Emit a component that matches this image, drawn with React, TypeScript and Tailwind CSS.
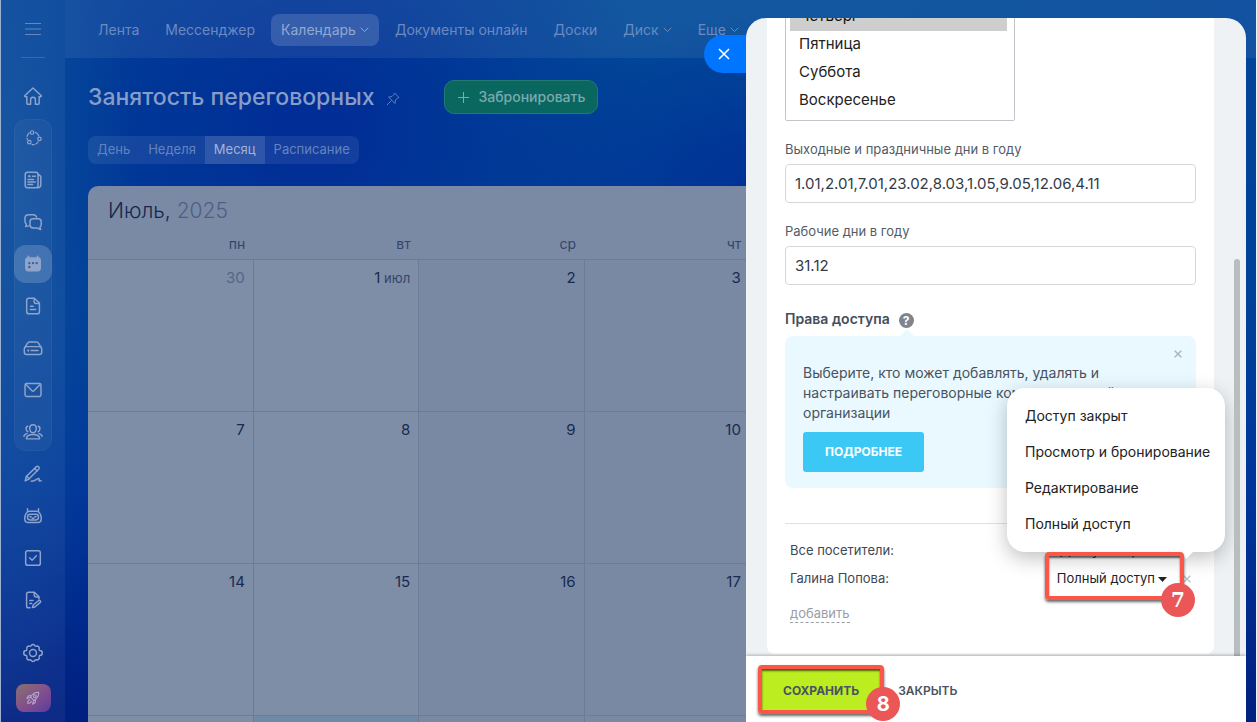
import { ReactNode, useState } from "react";
import clsx from "clsx";

type IconName =
  | "home" | "network" | "news" | "chats" | "calendar" | "doc" | "drive" | "mail"
  | "people" | "pen" | "robot" | "check" | "note" | "gear" | "rocket";

const icons: Record<IconName, ReactNode> = {
  home: <path d="M3.200 11.400 12 3.200l8.800 8.200c.5.500.2 1.300-.5 1.300h-1.600v7.400c0 .5-.3.800-.8.800h-3.300v-5a2.600 2.600 0 0 0-5.200 0v5H6.100a.8.8 0 0 1-.8-.8v-7.400H3.700c-.7 0-1-.8-.5-1.300Z" />,
  network: (
    <g strokeWidth="1.3">
      <circle cx="11" cy="6" r="1.900" />
      <circle cx="19" cy="13" r="1.900" />
      <circle cx="8" cy="16.500" r="1.900" />
      <path d="M7.800 6.500a7 7 0 0 0-2.300 3.800M5.500 12.300l.4 1.300M14.500 5.800a7.500 7.500 0 0 1 3.800 4M17.500 16.400a7 7 0 0 1-2.200 2M13.300 19.200h-2.400" />
    </g>
  ),
  news: (
    <>
      <rect x="3.500" y="3.500" width="14" height="17" rx="2.500" />
      <path d="M17.500 6.200c1.900.2 3 1 3 2.600v8.600c0 1.700-1.300 2.900-3.600 3" />
      <path d="M11.500 7.800h3M6.500 11.500h6M6.500 14.200h8M6.500 17h5" />
      <circle cx="8" cy="7.800" r="1.300" fill="currentColor" stroke="none" />
    </>
  ),
  chats: (
    <>
      <path d="M7.500 16.200c-1.500.3-2.600.7-3.600.6.6-.8.9-1.600.8-2.500-1-.9-1.500-2-1.500-3.500V8c0-2.500 1.500-4 4-4h5c2 0 3.200 1 3.700 2.600" />
      <path d="M12.200 8.500h5.300c2.200 0 3.500 1.400 3.500 3.500v2.500c0 1.300-.5 2.300-1.400 3-.1 1 .3 1.900.9 2.700-1.300 0-2.600-.7-3.700-1.700h-4.600c-2.200 0-3.500-1.400-3.500-3.500v-3c0-2.100 1.300-3.500 3.500-3.500Z" />
    </>
  ),
  calendar: (
    <>
      <path d="M7 2.800a1 1 0 0 1 1 1v.7h8v-.7a1 1 0 1 1 2 0v.8c1.800.3 2.700 1.300 2.700 3.100v9c0 2.200-1.200 3.400-3.400 3.400H6.700c-2.200 0-3.400-1.200-3.400-3.400v-9c0-1.800.9-2.800 2.700-3.100v-.8a1 1 0 0 1 1-1Z" fill="currentColor" stroke="none" />
      <g fill="#3c5fa0" stroke="none">
        <circle cx="8" cy="11" r="1.300" />
        <circle cx="12" cy="11" r="1.300" />
        <circle cx="16" cy="11" r="1.300" />
        <circle cx="8" cy="15.300" r="1.300" />
      </g>
    </>
  ),
  doc: (
    <>
      <path d="M7.500 3.500h6l5.500 5.300v9.400c0 1.500-.9 2.300-2.400 2.300H7.500c-1.500 0-2.400-.8-2.400-2.300V5.800c0-1.500.9-2.300 2.400-2.300Z" />
      <path d="M13.200 3.800v3.400c0 1.200.7 2 2 2h3.500M9.300 12.300h3M9 15.800h6" />
    </>
  ),
  drive: (
    <>
      <rect x="2.500" y="10.500" width="19" height="8.500" rx="2.500" />
      <path d="M3.500 10.800 6 6.800c.5-.9 1.200-1.300 2.200-1.300h7.600c1 0 1.700.4 2.200 1.300l2.500 4M10 14.800h7.500" />
      <circle cx="6.800" cy="14.800" r="1.200" fill="currentColor" stroke="none" />
    </>
  ),
  mail: (
    <>
      <rect x="3.300" y="5" width="17.400" height="14" rx="1.800" />
      <path d="m4 5.800 7 7c.6.6 1.400.6 2 0l7-7" />
    </>
  ),
  people: (
    <>
      <path d="M12 4c2.300 0 3.600 1.600 3.600 4.200 0 2.500-1.500 4.600-3.600 4.600s-3.600-2.100-3.600-4.600C8.400 5.600 9.700 4 12 4Z" />
      <path d="M5.500 19.500h13c.5 0 .8-.3.700-.8-.5-2.500-3.200-3.900-7.200-3.900s-6.700 1.400-7.200 3.900c-.1.500.2.800.7.800Z" />
      <path d="M6.300 5.800C4.800 6.200 4.300 7.600 4.500 9c.2 1.300.9 2.300 1.900 2.700M5.500 13.800c-2 .4-3.200 1.400-3.400 2.900M17.700 5.800c1.500.4 2 1.800 1.800 3.200-.2 1.300-.9 2.300-1.900 2.700M18.500 13.800c2 .4 3.200 1.400 3.400 2.900" />
    </>
  ),
  pen: (
    <>
      <path d="m3.500 19.500 1.200-4.800L15.500 4.200c.9-.9 1.900-.9 2.700-.1.900.9.900 1.900 0 2.800L7.500 17.500l-4 2Z" />
      <path d="m13.800 6 2.700 2.700M5 14.500l2.700 2.700M10 19.800c3.500.8 7-3.300 8.300-3 1.200.3-.4 2 .5 2.700.4.300 1.200.2 2.200-.2" />
    </>
  ),
  robot: (
    <>
      <path d="M6 4v3.300M18 4v3.300M8.300 6.700h7.400c3.300.8 5.300 4 5.300 8.300 0 3-1.300 4.200-4 4.200H7C4.300 19.200 3 18 3 15c0-4.300 2-7.500 5.300-8.300Z" />
      <rect x="6" y="10.200" width="12" height="6.200" rx="3" />
      <path d="M8.700 12.800H10M14 12.800h1.300M11 14.300c.6.500 1.400.5 2 0" />
    </>
  ),
  check: (
    <>
      <rect x="4" y="4" width="16" height="16" rx="2.300" />
      <path d="m8.300 11.800 2.700 2.600 4.700-4.900" />
    </>
  ),
  note: (
    <>
      <path d="M8.700 20.500H7.200c-1.400 0-2.200-.9-2.200-2.300V5.800c0-1.400.8-2.300 2.200-2.300h6.300l5 5v2.300" />
      <path d="M13.300 3.800v3c0 1.200.7 1.900 1.900 1.900h3M8.500 12.500h3.500M8.500 15.700h2" />
      <path d="m11.300 20.300.9-2.800 6-4.900c1.500-.7 2.700.9 1.800 2l-6 5-2.700.7Z" />
    </>
  ),
  gear: (
    <>
      <circle cx="12" cy="12" r="3.800" />
      <path d="M10 3.900a2.300 2.300 0 0 1 4 0c.4.6 1 .9 1.700.7a2.300 2.300 0 0 1 3 3c-.2.700.1 1.400.7 1.700a2.700 2.700 0 0 1 0 5.400c-.6.300-.9 1-.7 1.700a2.300 2.300 0 0 1-3 3c-.7-.2-1.300.1-1.700.7a2.300 2.300 0 0 1-4 0c-.4-.6-1-.9-1.700-.7a2.300 2.300 0 0 1-3-3c.2-.7-.1-1.400-.7-1.700a2.700 2.700 0 0 1 0-5.400c.6-.3.900-1 .7-1.700a2.300 2.300 0 0 1 3-3c.7.200 1.300-.1 1.700-.7Z" />
    </>
  ),
  rocket: (
    <>
      <path d="M20.500 3.500c-6-.3-9.700 2.500-12.200 7.300l4.900 4.900c4.800-2.500 7.600-6.200 7.300-12.200ZM9.800 8.200 5 8.800l-2.200 3.800 5.200-1.400M15.800 14.200l-.6 4.800-3.800 2.200 1.400-5.200M7 14.500c-2.200.6-3 2.800-3 5.500 2.700 0 4.900-.8 5.500-3" />
      <circle cx="14.800" cy="9.200" r="2" />
    </>
  ),
};

function Icon({ name, size = 22 }: { name: IconName; size?: number }) {
  return (
    <svg width={size} height={size} viewBox="0 0 24 24" fill="none" stroke="currentColor" strokeWidth="1.6" strokeLinecap="round" strokeLinejoin="round" aria-hidden="true">
      {icons[name]}
    </svg>
  );
}

function Chevron() {
  return (
    <svg width="9" height="6" viewBox="0 0 9 6" fill="none" stroke="currentColor" strokeLinecap="round" aria-hidden="true">
      <path d="m1 1 3.500 3.500L8 1" />
    </svg>
  );
}

function Cross({ size, width = 1.5 }: { size: number; width?: number }) {
  return (
    <svg width={size} height={size} viewBox="0 0 12 12" fill="none" stroke="currentColor" strokeWidth={width} aria-hidden="true">
      <path d="m1 1 10 10M11 1 1 11" />
    </svg>
  );
}

const groupedItems: { icon: IconName; label: string }[] = [
  { icon: "network", label: "Группы" },
  { icon: "news", label: "Новости" },
  { icon: "chats", label: "Мессенджер" },
  { icon: "calendar", label: "Календарь" },
  { icon: "doc", label: "Документы" },
  { icon: "drive", label: "Диск" },
  { icon: "mail", label: "Почта" },
  { icon: "people", label: "Сотрудники" },
];

const otherItems: { icon: IconName; label: string }[] = [
  { icon: "pen", label: "Подпись" },
  { icon: "robot", label: "Роботы" },
  { icon: "check", label: "Задачи" },
  { icon: "note", label: "Заметки" },
];

function SideButton({ icon, label, active }: { icon: IconName; label: string; active?: boolean }) {
  return (
    <button
      type="button"
      aria-label={label}
      className={clsx("flex size-[38px] shrink-0 items-center justify-center rounded-xl text-[#8fa4ca]", active && "bg-white/17")}
    >
      <Icon name={icon} />
    </button>
  );
}

function Sidebar() {
  return (
    <aside className="flex w-[64px] shrink-0 flex-col items-center bg-white/5 pb-[10px]">
      <button type="button" aria-label="Меню" className="flex h-[57px] items-center text-[#6786bb]">
        <svg width="16" height="12" viewBox="0 0 16 12" stroke="currentColor" aria-hidden="true">
          <path d="M0 .5h16M0 6h16M0 11.500h16" />
        </svg>
      </button>
      <div className="h-px w-6 bg-white/15" />
      <nav className="mt-[19px] flex flex-col gap-1">
        <SideButton icon="home" label="Главная" />
        <div className="flex flex-col gap-1 rounded-xl bg-white/4 ring-1 ring-white/4 ring-inset">
          {groupedItems.map((item) => <SideButton key={item.icon} {...item} active={item.icon === "calendar"} />)}
        </div>
        {otherItems.map((item) => <SideButton key={item.icon} {...item} />)}
      </nav>
      <div className="mt-auto flex flex-col items-center gap-3">
        <SideButton icon="gear" label="Настройки" />
        <button type="button" aria-label="Тариф" className="flex h-7 w-[35px] items-center justify-center rounded-lg bg-linear-to-br from-[#87706f] via-[#84508a] to-[#5c3aa0] text-[#b3abcb]">
          <Icon name="rocket" size={16} />
        </button>
      </div>
    </aside>
  );
}

const navItems = [
  { label: "Лента" },
  { label: "Мессенджер" },
  { label: "Календарь", menu: true, active: true },
  { label: "Документы онлайн" },
  { label: "Доски" },
  { label: "Диск", menu: true },
  { label: "Еще", menu: true },
];

const views = ["День", "Неделя", "Месяц", "Расписание"];
const weekdays = ["пн", "вт", "ср", "чт", "пт", "сб", "вс"];
const weeks = [
  ["30", "1", "2", "3", "4", "5", "6"],
  ["7", "8", "9", "10", "11", "12", "13"],
  ["14", "15", "16", "17", "18", "19", "20"],
  ["21", "22", "23", "24", "25", "26", "27"],
];

function Calendar() {
  return (
    <section className="mt-[22px] flex min-h-0 flex-1 flex-col overflow-hidden rounded-t-[10px] bg-[#7a8aa4]">
      <h2 className="px-5 pt-2 text-[21px] leading-[34px] font-light text-[#14264f]">
        Июль, <span className="text-[#4d5f85]">2025</span>
      </h2>
      <table className="w-full table-fixed border-collapse">
        <thead>
          <tr>
            {weekdays.map((day) => <th key={day} className="h-[31px] pt-[2px] pr-2 text-right text-sm font-normal text-[#33456c]">{day}</th>)}
          </tr>
        </thead>
        <tbody>
          {weeks.map((week, row) => (
            <tr key={week[0]}>
              {week.map((day, col) => (
                <td
                  key={day}
                  className={clsx(
                    "h-[152px] border-t border-r border-[#6b7c98] pt-2 pr-2 text-right align-top text-[15px] leading-5",
                    day === "22" ? "bg-[#6d8aa7]" : col < 2 ? "bg-[#7e8ea7]" : "bg-[#7989a3]",
                    row === 0 && col === 0 ? "text-[#53668a]" : "text-[#182a50]",
                  )}
                >
                  {day}
                  {day === "1" && <span className="text-[13px] text-[#33456c]"> июл</span>}
                </td>
              ))}
            </tr>
          ))}
        </tbody>
      </table>
    </section>
  );
}

function Workspace() {
  const [view, setView] = useState("Месяц");
  return (
    <div className="flex min-w-0 flex-1 flex-col">
      <nav className="flex h-[58px] shrink-0 items-center gap-[6px] bg-white/7 pt-[2px] pl-[23px] text-sm whitespace-nowrap text-[#6c8abf]">
        {navItems.map((item) => (
          <a
            key={item.label}
            href="#"
            className={clsx("flex h-8 items-center gap-1 rounded-lg px-[10px]", item.active && "bg-white/15 text-[#92a8d1]")}
          >
            {item.label}
            {item.menu && <Chevron />}
          </a>
        ))}
      </nav>
      <main className="flex min-h-0 flex-1 flex-col pr-[10px] pl-[23px]">
        <div className="mt-[22px] flex h-[34px] items-center">
          <h1 className="text-[23px] font-medium text-[#879dc7]">Занятость переговорных</h1>
          <svg className="mt-1 ml-3 text-[#5f7fba]" width="14" height="14" viewBox="0 0 14 14" fill="none" stroke="currentColor" strokeLinejoin="round" aria-hidden="true">
            <path d="m8.500 1 4.500 4.500-1.500.5-2 2-.5 3.500L2.500 5 6 4.500l2-2L8.500 1ZM5.500 8.500 1 13" />
          </svg>
          <button type="button" className="ml-11 flex h-[34px] items-center gap-2 rounded-[10px] border border-[#23796f] bg-[#09675f] px-3 text-sm font-medium text-[#7fa8b0]">
            <svg width="13" height="13" viewBox="0 0 13 13" stroke="currentColor" aria-hidden="true"><path d="M6.500 1v11M1 6.500h11" /></svg>
            Забронировать
          </button>
        </div>
        <div className="mt-[22px] flex h-7 self-start overflow-hidden rounded-lg bg-white/8 text-[13px] text-[#6483be]">
          {views.map((item) => (
            <button
              key={item}
              type="button"
              onClick={() => setView(item)}
              className={clsx("px-[9px]", item === view && "bg-white/11 text-[#a3b3d7]")}
            >
              {item}
            </button>
          ))}
        </div>
        <Calendar />
      </main>
    </div>
  );
}

const days = ["Понедельник", "Вторник", "Среда", "Четверг", "Пятница", "Суббота", "Воскресенье"];
const accessLevels = ["Доступ закрыт", "Просмотр и бронирование", "Редактирование", "Полный доступ"];

function Field({ id, label, value }: { id: string; label: string; value: string }) {
  return (
    <div className="mt-[18px]">
      <label htmlFor={id} className="block text-[13px] leading-5 text-[#525c69]">{label}</label>
      <input id={id} defaultValue={value} className="mt-[5px] block h-[39px] w-full rounded border border-[#d5d8db] bg-white px-[9px] text-[15px] text-[#333b47]" />
    </div>
  );
}

function Marker({ children, className }: { children: ReactNode; className?: string }) {
  return (
    <span className={clsx("absolute flex size-[34px] items-center justify-center rounded-full bg-[#eb5757] text-xl font-bold text-white", className)}>
      {children}
    </span>
  );
}

const frameClass = "pointer-events-none absolute rounded border-4 border-[#fb5748] shadow-[0_2px_3px_#0009,inset_0_2px_2px_#0009]";

function AccessRow({ name, level, open }: { name: string; level: string; open?: boolean }) {
  return (
    <div className="relative flex h-7 items-center text-[13px] text-[#3f4855]">
      <span className="flex-1">{name}</span>
      <button type="button" aria-haspopup="menu" aria-expanded={open} className="flex items-center gap-[3px] text-[13px] text-[#1f2328]">
        {level}
        <svg width="9" height="5" viewBox="0 0 9 5" fill="currentColor" aria-hidden="true"><path d="M0 0h9L4.500 5Z" /></svg>
      </button>
      <button type="button" aria-label="Удалить" className="ml-4 text-[#b9bfc6]"><Cross size={8} width={2} /></button>
      {open && (
        <>
          <div role="menu" className="absolute right-[-34px] bottom-[41px] w-[218px] rounded-[18px] bg-white py-[10px] shadow-[0_6px_20px_#00000040]">
            {accessLevels.map((item) => (
              <button key={item} type="button" role="menuitem" className="block h-9 w-full px-[18px] text-left text-sm whitespace-nowrap text-[#222]">{item}</button>
            ))}
            <svg className="absolute top-full right-8" width="14" height="7" viewBox="0 0 14 7" fill="#fff" aria-hidden="true"><path d="M0 0h14L7 7Z" /></svg>
          </div>
          <div className={clsx(frameClass, "right-[7px] bottom-[-7px] h-12 w-[139px]")} />
          <Marker className="right-[-4px] bottom-[-24px] font-['DejaVu_Serif',serif]">7</Marker>
        </>
      )}
    </div>
  );
}

function SettingsPanel() {
  return (
    <div role="dialog" aria-label="Настройки" className="absolute top-[18px] right-[10px] bottom-0 w-[500px]">
      <button type="button" aria-label="Закрыть панель" className="absolute top-[17px] left-[-42px] flex h-[38px] w-12 items-center rounded-l-full bg-[#0075ff] pl-[14px] text-white">
        <Cross size={12} width={1.6} />
      </button>
      <form className="relative flex h-full flex-col overflow-hidden rounded-t-[20px] bg-[#eef2f4]" onSubmit={(event) => event.preventDefault()}>
        <div className="flex min-h-0 flex-1 flex-col justify-end pr-8 pb-[2px] pl-[21px]">
          <div className="rounded-lg bg-white px-[18px] pb-[30px]">
            <select multiple size={7} aria-label="Выходные дни" defaultValue={["Четверг"]} className="block h-[211px] w-[230px] overflow-hidden rounded-xs border border-[#c0c5cc] py-2 pr-[7px] pl-1 text-[15px] text-[#222]">
              {days.map((day) => <option key={day} className="h-7 px-[9px] py-[3px] leading-[22px]">{day}</option>)}
            </select>
            <Field id="holidays" label="Выходные и праздничные дни в году" value="1.01,2.01,7.01,23.02,8.03,1.05,9.05,12.06,4.11" />
            <Field id="workdays" label="Рабочие дни в году" value="31.12" />

            <h3 className="mt-6 flex h-5 items-center gap-[9px] text-sm font-semibold text-[#454e5b]">
              Права доступа
              <span className="mt-[3px] flex size-[15px] items-center justify-center rounded-full bg-[#7e8590] text-xs font-bold text-white">?</span>
            </h3>
            <div className="relative mt-[7px] h-[152px] rounded-lg bg-[#e9f9ff] px-[18px] pt-[27px] text-sm leading-5 text-[#48535f]">
              <svg className="absolute bottom-full left-[115px]" width="14" height="7" viewBox="0 0 14 7" fill="#e9f9ff" aria-hidden="true"><path d="M0 7h14L7 0Z" /></svg>
              <p className="w-[340px]">Выберите, кто может добавлять, удалять и настраивать переговорные комнаты в вашей организации</p>
              <button type="button" className="mt-[9px] h-10 rounded-[3px] bg-[#3bc8f5] px-[22px] text-xs font-bold text-white">ПОДРОБНЕЕ</button>
              <button type="button" aria-label="Скрыть подсказку" className="absolute top-[14px] right-[14px] text-[#a9b6bf]"><Cross size={8} width={2.2} /></button>
            </div>

            <div className="mt-[35px] border-t border-[#dfe2e5] px-[5px] pt-[13px]">
              <AccessRow name="Все посетители:" level="Доступ закрыт" />
              <AccessRow name="Галина Попова:" level="Полный доступ" open />
              <a href="#" className="mt-[11px] inline-block border-b border-dashed border-[#999ea6] text-[13px] leading-[18px] text-[#999ea6]">добавить</a>
            </div>
          </div>
        </div>
        <div className="absolute top-[241px] right-[6px] bottom-[66px] w-[6px] rounded-t-full bg-[#b8bdbf]" />
        <footer className="relative flex h-[66px] shrink-0 items-center bg-white pl-4 text-xs font-semibold text-[#4a5360] shadow-[0_-1px_3px_#0004]">
          <div className="relative">
            <button type="submit" className="h-[41px] bg-[#bbed21] px-[21px] pt-1 font-bold">СОХРАНИТЬ</button>
            <div className={clsx(frameClass, "-inset-1")} />
            <Marker className="right-[-20px] bottom-[-11px]">8</Marker>
          </div>
          <button type="button" className="ml-[18px] pt-1">ЗАКРЫТЬ</button>
        </footer>
      </form>
    </div>
  );
}

export default function App() {
  return (
    <div className="relative flex h-screen overflow-hidden border-r border-l border-r-[#eef2f8] border-l-[#9db2d3] bg-[#003294] bg-[radial-gradient(ellipse_130px_560px_at_0px_160px,#0b4c9c,#0b4c9c00),radial-gradient(ellipse_340px_300px_at_310px_130px,#002e96_10%,#002e9600),radial-gradient(ellipse_320px_180px_at_790px_190px,#002f96,#002f9600),radial-gradient(ellipse_700px_300px_at_760px_0px,#004b98,#004b9800),linear-gradient(180deg,#00439a_0%,#004299_40%,#00359a_68%,#002080_100%)] font-['Inter',sans-serif]">
      <Sidebar />
      <Workspace />
      <SettingsPanel />
    </div>
  );
}
